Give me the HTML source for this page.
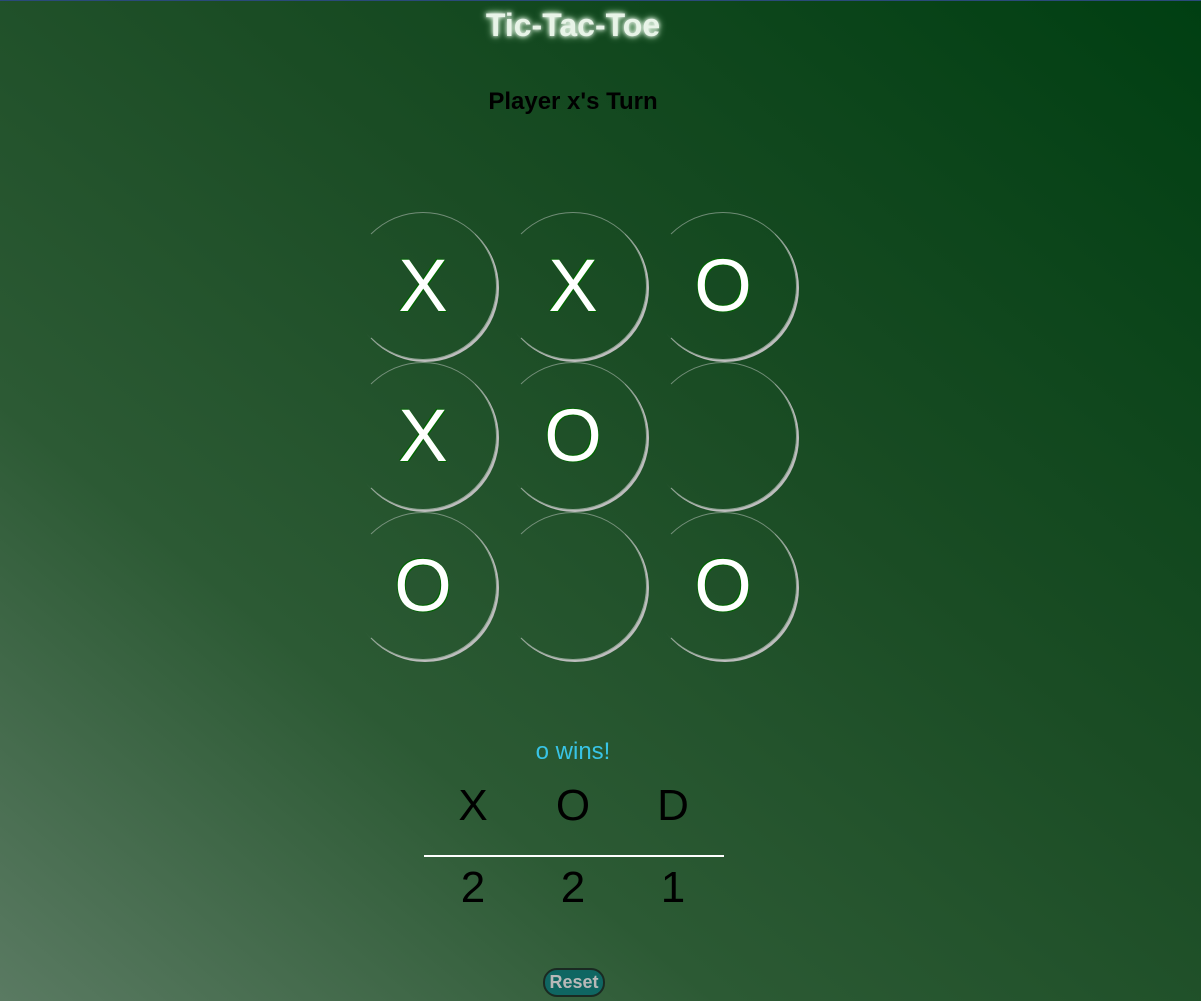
<!DOCTYPE html>
<html><head><style>
html,body{margin:0;padding:0;}
body{width:1201px;height:1001px;overflow:hidden;position:relative;font-family:"Liberation Sans",sans-serif;
background:linear-gradient(to top right,#5a7a62 0%,#2c5a34 30%,#1a4c24 60%,#003f12 100%);border-top:1px solid #2a4a7a;box-sizing:border-box;}
.t{position:absolute;left:0;width:1146px;text-align:center;}
h1{position:absolute;margin:0;top:6px;left:0;width:1146px;text-align:center;font-size:32px;font-weight:bold;color:#e8f4e8;text-shadow:0 0 4px #fff,0 0 8px #cfc;}
.c{position:absolute;width:146px;height:146px;border-radius:50%;border:1px solid;border-color:rgba(220,220,220,0.45) rgba(220,220,220,0.6) rgba(220,220,220,0.6) transparent;box-shadow:2px 2px 0 #bdbdbd;color:#fff;font-size:74px;text-align:center;line-height:146px;
text-shadow:0 0 1px #060,1px 1px 0 #060,-1px -1px 0 #060;}
.s{position:absolute;font-size:44px;color:#000;width:100px;text-align:center;}
</style></head><body>
<h1>Tic-Tac-Toe</h1>
<div class="t" style="top:87px;font-size:24px;font-weight:bold;color:#000;">Player x's Turn</div>
<div class="c" style="left:349px;top:211px">X</div>
<div class="c" style="left:499px;top:211px">X</div>
<div class="c" style="left:649px;top:211px">O</div>
<div class="c" style="left:349px;top:361px">X</div>
<div class="c" style="left:499px;top:361px">O</div>
<div class="c" style="left:649px;top:361px"></div>
<div class="c" style="left:349px;top:511px">O</div>
<div class="c" style="left:499px;top:511px"></div>
<div class="c" style="left:649px;top:511px">O</div>
<div class="t" style="top:737px;font-size:24px;color:#38c4e6;">o wins!</div>
<div class="s" style="left:423px;top:780px">X</div>
<div class="s" style="left:523px;top:780px">O</div>
<div class="s" style="left:623px;top:780px">D</div>
<div style="position:absolute;left:424px;top:854px;width:300px;height:2px;background:#fff"></div>
<div class="s" style="left:423px;top:862px">2</div>
<div class="s" style="left:523px;top:862px">2</div>
<div class="s" style="left:623px;top:862px">1</div>
<div style="position:absolute;left:543px;top:967px;width:58px;height:25px;border:2px solid #1a2a22;border-radius:14px;background:#0f6662;color:#b8b8b8;font-weight:bold;font-size:18px;text-align:center;line-height:25px;">Reset</div>
</body></html>
